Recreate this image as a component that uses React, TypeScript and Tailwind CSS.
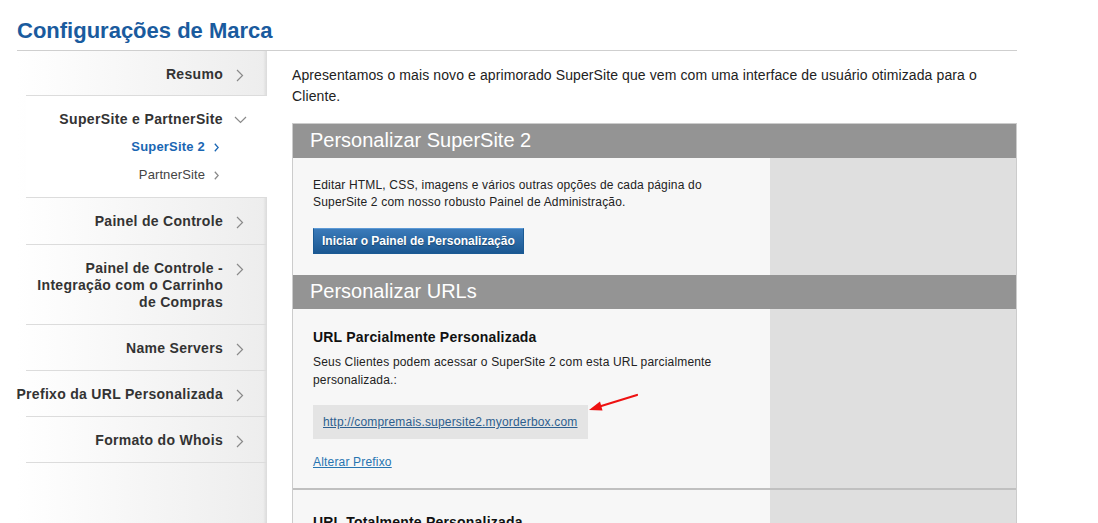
import React from 'react';

const font = { fontFamily: '"Liberation Sans", Arial, sans-serif' };

const ChevronRight: React.FC<{ small?: boolean; color?: string }> = ({ small, color = '#8a8a8a' }) => (
  <svg width={small ? 5 : 8} height={small ? 9 : 13} viewBox={small ? '0 0 5 9' : '0 0 8 13'} fill="none">
    {small ? (
      <polyline points="0.8,0.8 4.2,4.5 0.8,8.2" stroke={color} strokeWidth="1.3" />
    ) : (
      <polyline points="1,1 6.5,6.5 1,12" stroke={color} strokeWidth="1.2" />
    )}
  </svg>
);

const ChevronDown = () => (
  <svg width="13" height="8" viewBox="0 0 13 8" fill="none">
    <polyline points="1,1 6.5,6.5 12,1" stroke="#8a8a8a" strokeWidth="1.2" />
  </svg>
);

const NavRow: React.FC<{ label: React.ReactNode; h: string }> = ({ label, h }) => (
  <div className={`flex items-start justify-end border-b border-[#dcdcdc] ml-[9px] ${h}`}>
    <div className="text-right whitespace-nowrap text-[14px] tracking-[0.3px] font-bold leading-[17px] text-[#333]">
      {label}
    </div>
    <div className="w-[44px] shrink-0 flex pl-[13px] pt-[3px]">
      <ChevronRight />
    </div>
  </div>
);

export default function App() {
  return (
    <div className="bg-white w-[1098px] h-[523px] overflow-hidden text-[#222]" style={font}>
      <div className="ml-[17px] w-[1000px]">
        <h1 className="pt-[17px] pb-[6px] text-[22px] leading-[27px] font-bold text-[#1a5b9e]">
          Configurações de Marca
        </h1>
        <div className="h-px bg-[#cfcfcf]" />

        <div className="flex">
          {/* Sidebar */}
          <aside className="w-[250px] shrink-0 bg-gradient-to-r from-white to-[#ededed] shadow-[inset_-4px_0_3px_-2px_rgba(0,0,0,0.08)] h-[472px]">
            <NavRow h="h-[45px] pt-[15px]" label="Resumo" />
            <div className="bg-white h-[102px] ml-[9px] border-b border-[#dcdcdc] pt-[15px]">
              <div className="flex justify-end items-center">
                <span className="text-[14px] tracking-[0.35px] font-bold leading-[17px] text-[#333]">
                  SuperSite e PartnerSite
                </span>
                <div className="w-[44px] flex pl-[11px]">
                  <ChevronDown />
                </div>
              </div>
              <div className="flex justify-end items-center mt-[10px] pr-[48px]">
                <span className="text-[13px] tracking-[0.2px] font-bold leading-[17px] text-[#1a66b3]">SuperSite 2</span>
                <span className="ml-[9px] mt-[1px]"><ChevronRight small color="#1a66b3" /></span>
              </div>
              <div className="flex justify-end items-center mt-[11px] pr-[48px]">
                <span className="text-[13px] tracking-[0.1px] leading-[17px] text-[#444]">PartnerSite</span>
                <span className="ml-[9px] mt-[1px]"><ChevronRight small /></span>
              </div>
            </div>
            <NavRow h="h-[47px] pt-[15px]" label="Painel de Controle" />
            <NavRow
              h="h-[80px] pt-[15px]"
              label={
                <>
                  Painel de Controle -<br />
                  Integração com o Carrinho<br />
                  de Compras
                </>
              }
            />
            <NavRow h="h-[46px] pt-[15px]" label="Name Servers" />
            <NavRow h="h-[46px] pt-[15px]" label="Prefixo da URL Personalizada" />
            <NavRow h="h-[46px] pt-[15px]" label="Formato do Whois" />
          </aside>

          {/* Content */}
          <main className="flex-1 pl-[25px]">
            <p className="pt-[14px] text-[14px] tracking-[0.1px] leading-[21px] text-[#222]">
              Apresentamos o mais novo e aprimorado SuperSite que vem com uma interface de usuário otimizada para o Cliente.
            </p>

            <div className="mt-[16px] border border-[#cccccc] border-b-0">
              <div className="h-[34px] bg-[#949494] pl-[17px] text-[20px] leading-[33px] text-white">
                Personalizar SuperSite 2
              </div>
              <div className="flex">
                <div className="w-[477px] bg-[#f7f7f7] pl-[20px] pt-[19px] pb-[21px]">
                  <p className="text-[12px] tracking-[0.18px] leading-[17px] text-[#222]">
                    Editar HTML, CSS, imagens e vários outras opções de cada página do<br />
                    SuperSite 2 com nosso robusto Painel de Administração.
                  </p>
                  <button className="mt-[17px] h-[26px] px-[8px] border border-[#1b5a94] border-t-[#5d9ad6] bg-gradient-to-b from-[#3b7bba] to-[#1b5892] text-white text-[12px] font-bold [text-shadow:0_1px_1px_rgba(0,0,0,0.35)]">
                    Iniciar o Painel de Personalização
                  </button>
                </div>
                <div className="flex-1 bg-[#dfdfdf]" />
              </div>

              <div className="h-[34px] bg-[#949494] pl-[17px] text-[20px] leading-[33px] text-white">
                Personalizar URLs
              </div>
              <div className="flex border-b-2 border-[#c0c0c0]">
                <div className="relative w-[477px] bg-[#f7f7f7] pl-[20px] pt-[18px] pb-[15px]">
                  <h3 className="text-[14px] tracking-[0.2px] leading-[20px] font-bold text-[#111]">
                    URL Parcialmente Personalizada
                  </h3>
                  <p className="mt-[6px] text-[12px] tracking-[0.18px] leading-[18px] text-[#222]">
                    Seus Clientes podem acessar o SuperSite 2 com esta URL parcialmente<br />
                    personalizada.:
                  </p>
                  <div className="mt-[16px] inline-flex h-[34px] items-center bg-[#e4e4e4] px-[10px]">
                    <a href="#" className="text-[12px] tracking-[0.18px] text-[#2d5f8f] underline">
                      http://compremais.supersite2.myorderbox.com
                    </a>
                  </div>
                  <div className="mt-[10px]">
                    <a href="#" className="text-[12px] tracking-[0.18px] leading-[16px] text-[#2775b1] underline">
                      Alterar Prefixo
                    </a>
                  </div>
                  <svg className="absolute left-[295px] top-[84px]" width="52" height="20" viewBox="0 0 52 20">
                    <line x1="49" y1="2" x2="10" y2="14" stroke="#ee1111" strokeWidth="2.2" strokeLinecap="round" />
                    <polygon points="1,17 12,8.5 14.5,17.5" fill="#ee1111" />
                  </svg>
                </div>
                <div className="flex-1 bg-[#dfdfdf]" />
              </div>

              <div className="flex h-[40px]">
                <div className="w-[477px] bg-[#f7f7f7] pl-[20px] pt-[22px]">
                  <h3 className="text-[14px] tracking-[0.2px] leading-[20px] font-bold text-[#111]">
                    URL Totalmente Personalizada
                  </h3>
                </div>
                <div className="flex-1 bg-[#dfdfdf]" />
              </div>
            </div>
          </main>
        </div>
      </div>
    </div>
  );
}
